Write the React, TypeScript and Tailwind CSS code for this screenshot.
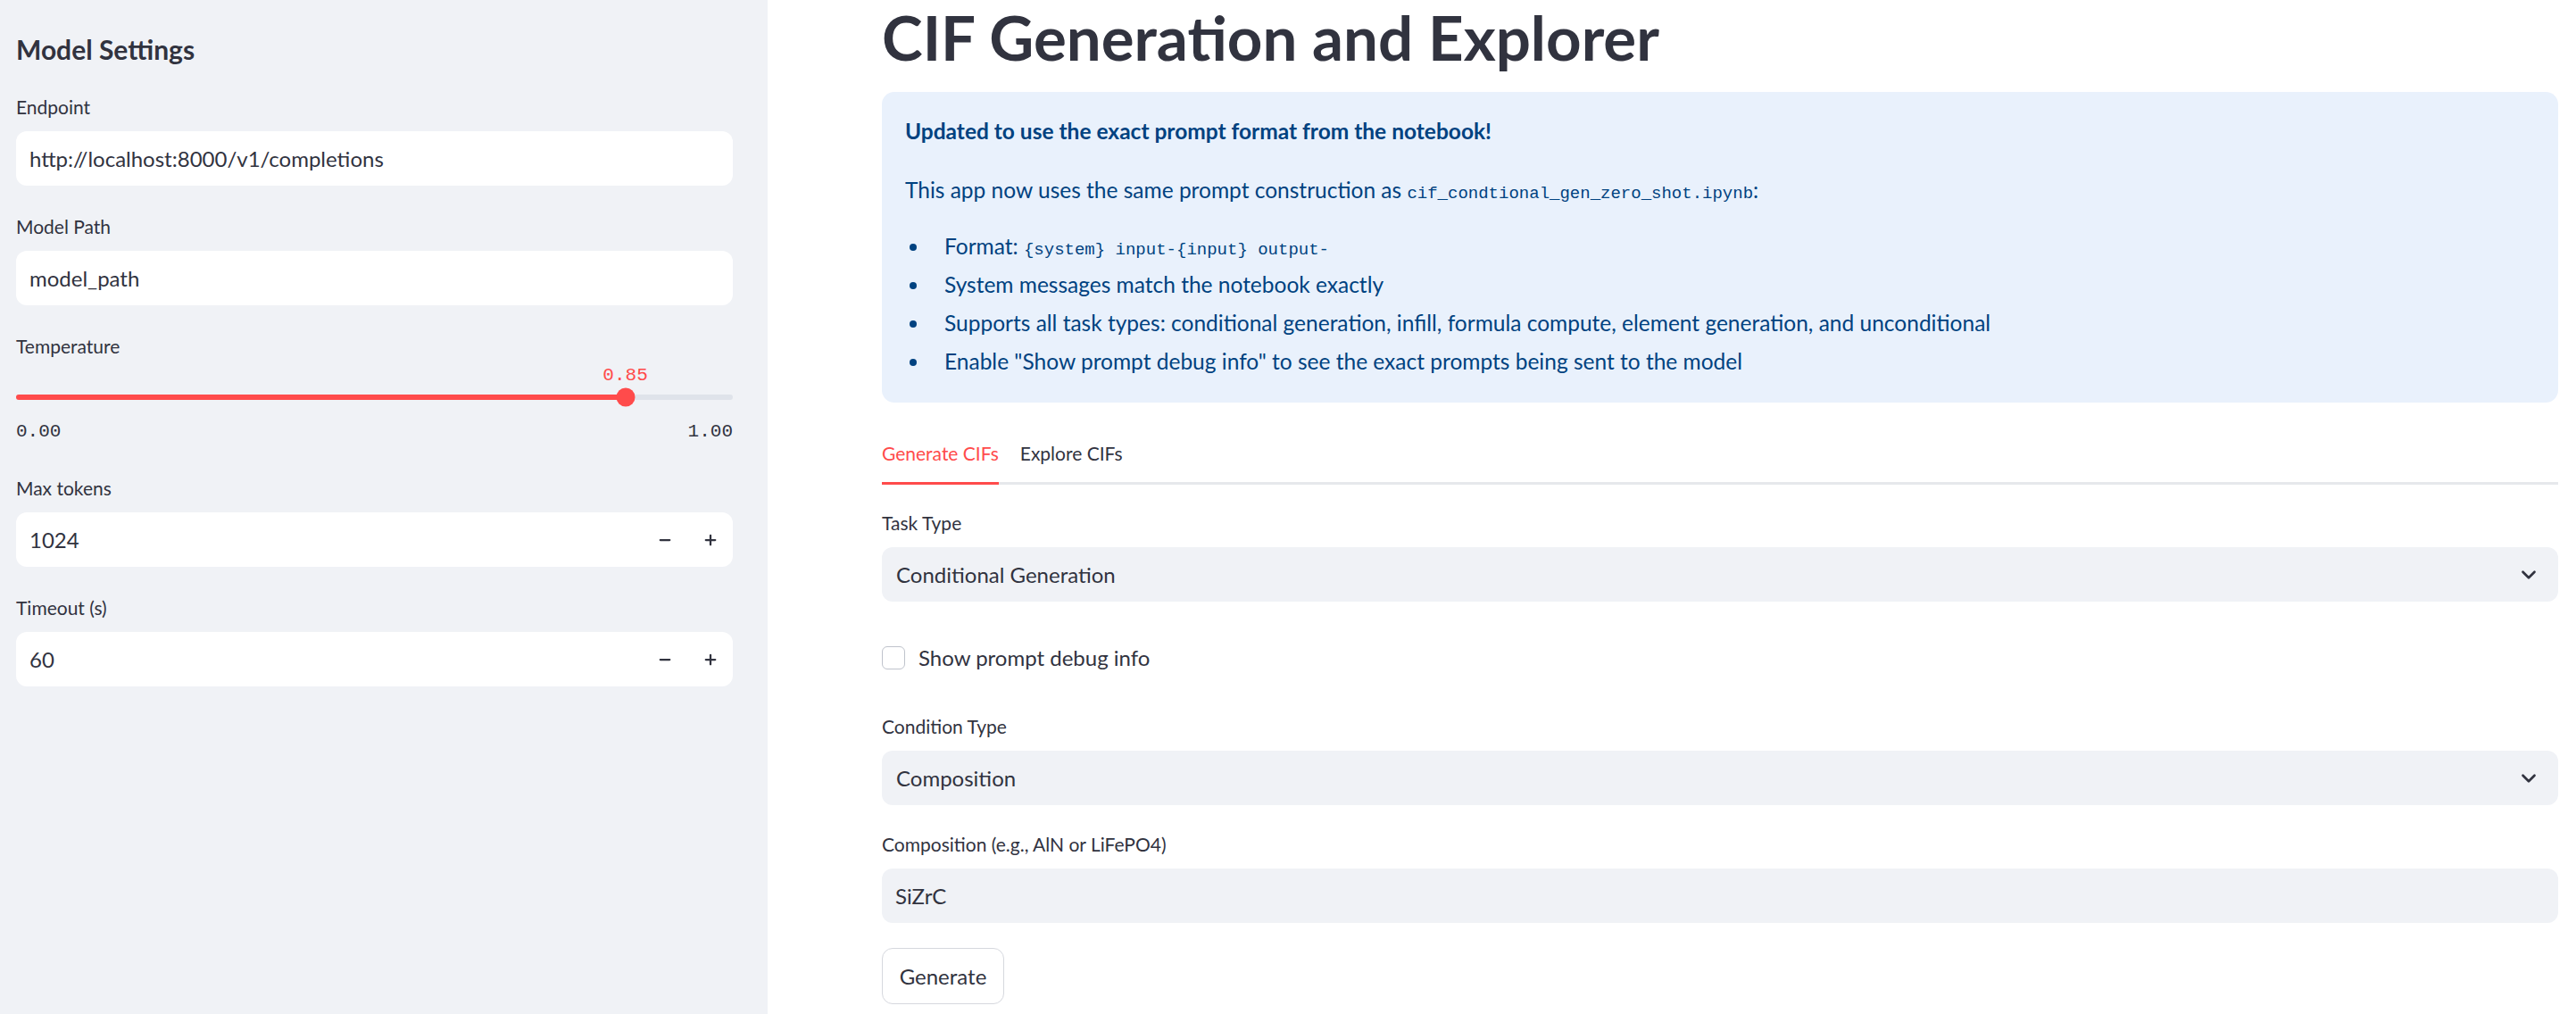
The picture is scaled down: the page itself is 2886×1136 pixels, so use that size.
import { ChevronDown, Minus, Plus } from "lucide-react";

const Label = ({ children }: { children: React.ReactNode }) => (
  <div className="h-[30px] leading-[30px] text-[21px] text-[#31333f] mb-[12px]">{children}</div>
);

const NumberInput = ({ value }: { value: string }) => (
  <div className="flex h-[61px] items-center rounded-[12px] bg-white">
    <span className="flex-1 pl-[15px] text-[24px] text-[#31333f]">{value}</span>
    <button className="flex h-full w-[51px] items-center justify-center text-[#31333f]">
      <Minus className="h-[18px] w-[18px]" strokeWidth={3} />
    </button>
    <button className="flex h-full w-[51px] items-center justify-center text-[#31333f]">
      <Plus className="h-[18px] w-[18px]" strokeWidth={3} />
    </button>
  </div>
);

const Select = ({ value }: { value: string }) => (
  <div className="flex h-[61px] items-center justify-between rounded-[12px] bg-[#f0f2f6] pl-[16px] pr-[20px]">
    <span className="text-[24px] text-[#31333f]">{value}</span>
    <ChevronDown className="h-[26px] w-[26px] text-[#31333f]" strokeWidth={2.5} />
  </div>
);

const Sidebar = () => {
  return (
    <aside className="w-[860px] shrink-0 bg-[#f0f2f6] px-[18px] pt-[35px] pr-[39px]">
      <h3 className="h-[40px] leading-[40px] text-[30px] font-bold text-[#31333f]">Model Settings</h3>

      <div className="mt-[30px] flex flex-col gap-[31px]">
        <div>
          <Label>Endpoint</Label>
          <div className="flex h-[61px] items-center rounded-[12px] bg-white pl-[15px] text-[24px] text-[#31333f]">
            http://localhost:8000/v1/completions
          </div>
        </div>

        <div>
          <Label>Model Path</Label>
          <div className="flex h-[61px] items-center rounded-[12px] bg-white pl-[15px] text-[24px] text-[#31333f]">
            model_path
          </div>
        </div>

        <div>
          <Label>Temperature</Label>
          <div className="relative h-[18px]">
            <span
              className="absolute top-[-6px] -translate-x-1/2 font-['Liberation_Mono',monospace] text-[21px] leading-[24px] text-[#ff4b4b]"
              style={{ left: "85%" }}
            >
              0.85
            </span>
          </div>
          <div className="relative mt-[9px] h-[6px] rounded-full bg-[#dfe3ea]">
            <div className="h-full rounded-full bg-[#ff4b4b]" style={{ width: "85%" }} />
            <div
              className="absolute top-1/2 h-[21px] w-[21px] -translate-x-1/2 -translate-y-1/2 rounded-full bg-[#ff4b4b]"
              style={{ left: "85%" }}
            />
          </div>
          <div className="mt-[23px] mb-[4px] flex justify-between font-['Liberation_Mono',monospace] text-[21px] leading-[26px] text-[#31333f]">
            <span>0.00</span>
            <span>1.00</span>
          </div>
        </div>

        <div>
          <Label>Max tokens</Label>
          <NumberInput value="1024" />
        </div>

        <div>
          <Label>Timeout (s)</Label>
          <NumberInput value="60" />
        </div>
      </div>
    </aside>
  );
};

const Bullet = ({ children }: { children: React.ReactNode }) => (
  <li className="flex h-[43px] items-center">
    <span className="ml-[5px] mr-[31px] h-[8px] w-[8px] rounded-full bg-[#004280]" />
    <span>{children}</span>
  </li>
);

const Code = ({ children }: { children: React.ReactNode }) => (
  <code className="font-['Liberation_Mono',monospace] text-[19px]">{children}</code>
);

const Main = () => {
  return (
    <main className="flex-1 pl-[128px] pr-[20px]">
      <h1 className="leading-[84px] text-[69px] font-bold text-[#31333f]">CIF Generation and Explorer</h1>

      <div className="mt-[19px] rounded-[14px] bg-[#e9f1fc] px-[26px] pt-[26px] pb-[24px] text-[24.5px] text-[#004280]">
        <p className="h-[36px] leading-[36px] font-bold">Updated to use the exact prompt format from the notebook!</p>
        <p className="mt-[30px] h-[36px] leading-[36px]">
          This app now uses the same prompt construction as <Code>cif_condtional_gen_zero_shot.ipynb</Code>:
        </p>
        <ul className="mt-[24px]">
          <Bullet>
            Format: <Code>{"{system} input-{input} output-"}</Code>
          </Bullet>
          <Bullet>System messages match the notebook exactly</Bullet>
          <Bullet>Supports all task types: conditional generation, infill, formula compute, element generation, and unconditional</Bullet>
          <Bullet>Enable "Show prompt debug info" to see the exact prompts being sent to the model</Bullet>
        </ul>
      </div>

      <div className="mt-[42px] flex gap-[24px] border-b-[3px] border-[#e6e8ec] text-[21px]">
        <div className="relative pb-[17px] leading-[30px] text-[#ff4b4b]">
          Generate CIFs
          <div className="absolute bottom-[-3px] left-0 right-0 h-[3px] bg-[#ff4b4b]" />
        </div>
        <div className="pb-[17px] leading-[30px] text-[#31333f]">Explore CIFs</div>
      </div>

      <div className="mt-[28px]">
        <Label>Task Type</Label>
        <Select value="Conditional Generation" />
      </div>

      <div className="mt-[48px] flex h-[30px] items-center gap-[15px]">
        <span className="h-[26px] w-[26px] rounded-[6px] border-[1.5px] border-[#bfc3cc] bg-white" />
        <span className="text-[24px] text-[#31333f]">Show prompt debug info</span>
      </div>

      <div className="mt-[47px]">
        <Label>Condition Type</Label>
        <Select value="Composition" />
      </div>

      <div className="mt-[29px]">
        <Label>Composition (e.g., AlN or LiFePO4)</Label>
        <div className="flex h-[61px] items-center rounded-[12px] bg-[#f0f2f6] pl-[15px] text-[24px] text-[#31333f]">
          SiZrC
        </div>
      </div>

      <button className="mt-[28px] h-[63px] w-[137px] rounded-[12px] border border-[#d6d8de] bg-white text-[24px] text-[#31333f]">
        Generate
      </button>
    </main>
  );
};

export default function App() {
  return (
    <div className="flex h-[1136px] overflow-hidden bg-white font-[Lato,'Noto_Sans',sans-serif]">
      <Sidebar />
      <Main />
    </div>
  );
}
